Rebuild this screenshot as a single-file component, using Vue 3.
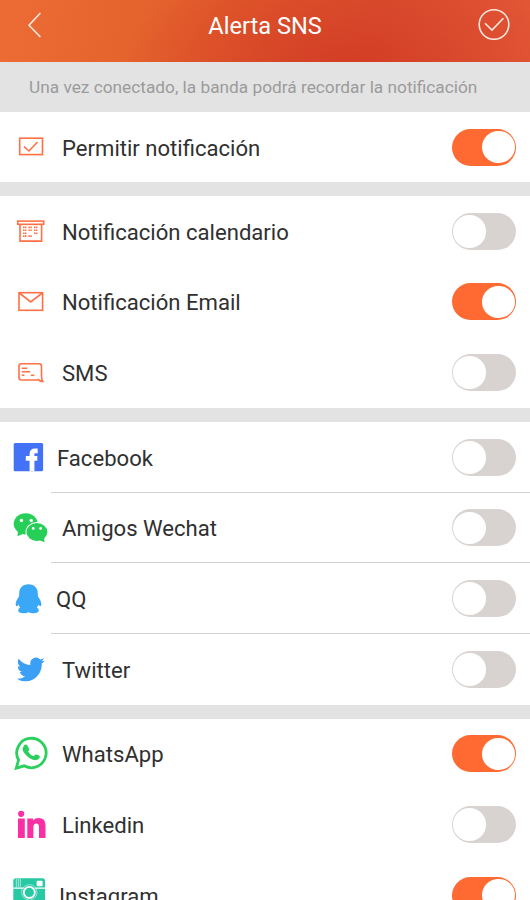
<script setup>
import { reactive } from 'vue'

const groups = reactive([
  [{ id: 'allow', label: 'Permitir notificación', on: true }],
  [
    { id: 'calendar', label: 'Notificación calendario', on: false },
    { id: 'email', label: 'Notificación Email', on: true },
    { id: 'sms', label: 'SMS', on: false },
  ],
  [
    { id: 'facebook', label: 'Facebook', on: false, line: true },
    { id: 'wechat', label: 'Amigos Wechat', on: false, line: true },
    { id: 'qq', label: 'QQ', on: false, line: true },
    { id: 'twitter', label: 'Twitter', on: false },
  ],
  [
    { id: 'whatsapp', label: 'WhatsApp', on: true },
    { id: 'linkedin', label: 'Linkedin', on: false },
    { id: 'instagram', label: 'Instagram', on: true },
  ],
])
</script>

<template>
  <div class="screen">
    <header class="bar">
      <svg class="back" viewBox="0 0 20 30"><path d="M16.4 3 5 15.2 16.4 27" /></svg>
      <h1>Alerta SNS</h1>
      <svg class="done" viewBox="0 0 34 34">
        <circle cx="17" cy="16.5" r="14.8" />
        <path d="M8 15.2 15 22 26.4 10.2" />
      </svg>
    </header>
    <p class="note">Una vez conectado, la banda podrá recordar la notificación</p>
    <section v-for="(group, g) in groups" :key="g" class="group">
      <div v-for="item in group" :key="item.id" class="row" :class="[item.id, { line: item.line }]">
        <svg class="icon" viewBox="0 0 40 40">
          <g v-if="item.id === 'allow'" class="outline">
            <rect x="7.7" y="11.2" width="22.8" height="16.4" />
            <path d="M12 19.7 17 24 25.5 15" />
          </g>
          <g v-else-if="item.id === 'calendar'" class="outline">
            <rect x="5.7" y="10.1" width="26" height="3.2" />
            <path d="M8 13V30.1H29.6V13" />
            <path class="dots" d="M11 16.4h3.4M16.4 16.4h3.4M22 16.4h3.4M11 19.3h3.4M16.4 19.3h3.4M22 19.3h3.4M11 22.2h3.4M22 22.2h3.4M11 25.1h3.4M16.4 25.1h3.4" />
          </g>
          <g v-else-if="item.id === 'email'" class="outline">
            <rect x="7" y="10.7" width="23.6" height="17.6" />
            <path d="M7.3 11 18.7 20 30.3 11" />
          </g>
          <g v-else-if="item.id === 'sms'" class="outline">
            <path d="M26.5 27H9.5Q7 27 7 24.5V13.3Q7 10.8 9.5 10.8H27Q29.5 10.8 29.5 13.3V22.5Q29.3 26 30.8 28.5 27.5 28.5 25.8 26" />
            <path d="M9.7 15.3H15.3M9.7 18.7H18.3M9.7 22.2H12.4M18.8 22.2H22.4" />
          </g>
          <g v-else-if="item.id === 'facebook'">
            <rect x="1.7" y="6" width="29.4" height="28.3" rx="1.5" fill="#4372f6" />
            <path d="M20 34.3V17Q20 13.9 23.2 13.9H25.7M13.8 21.4H25.3" fill="none" stroke="#fff" stroke-width="4.8" />
          </g>
          <g v-else-if="item.id === 'wechat'" fill="#27cf58">
            <ellipse cx="13.7" cy="15.8" rx="12" ry="10.6" />
            <path d="M6 23 5.5 28.3 12 25.5Z" />
            <ellipse cx="24.9" cy="24" rx="11.4" ry="10" fill="#fff" />
            <ellipse cx="24.9" cy="24" rx="10.5" ry="9" />
            <path d="M27 32 32.5 34.3 32 28Z" />
            <g fill="#fff">
              <circle cx="9.4" cy="12.5" r="1.7" /><circle cx="19.2" cy="12.5" r="1.7" />
              <circle cx="21.2" cy="20.4" r="1.4" /><circle cx="28.6" cy="20.4" r="1.4" />
            </g>
          </g>
          <path v-else-if="item.id === 'qq'" fill="#3ba7f7" d="M16.5 5.3C10.5 5.3 7.2 9.4 7.2 14.5L7 17.5C5.2 20 3.7 22.5 3.7 25C3.7 28 5 27.5 6.8 25.8C7.1 27.4 7.5 28 8.2 28.6C5 30.7 5.4 34.3 11 34.3C14 34.3 15.6 33.6 16.5 33.2C17.4 33.6 19 34.3 22 34.3C27.6 34.3 28 30.7 24.8 28.6C25.5 28 25.9 27.4 26.2 25.8C28 27.5 29.3 28 29.3 25C29.3 22.5 27.8 20 26 17.5L25.8 14.5C25.8 9.4 22.5 5.3 16.5 5.3Z" />
          <path v-else-if="item.id === 'twitter'" fill="#3a9ff5" transform="translate(4.7 5.8) scale(1.167 1.22)" d="M23.953 4.57a10 10 0 01-2.825.775 4.958 4.958 0 002.163-2.723c-.951.555-2.005.959-3.127 1.184a4.92 4.92 0 00-8.384 4.482C7.69 8.095 4.067 6.13 1.64 3.162a4.822 4.822 0 00-.666 2.475c0 1.71.87 3.213 2.188 4.096a4.904 4.904 0 01-2.228-.616v.06a4.923 4.923 0 003.946 4.827 4.996 4.996 0 01-2.212.085 4.936 4.936 0 004.604 3.417 9.867 9.867 0 01-6.102 2.105c-.39 0-.779-.023-1.17-.067a13.995 13.995 0 007.557 2.209c9.053 0 13.998-7.496 13.998-13.985 0-.21 0-.42-.015-.63A9.935 9.935 0 0024 4.59z" />
          <g v-else-if="item.id === 'whatsapp'" transform="translate(-.3 -.4)">
            <path d="M4.6 34.6 6.8 26.4A14.7 14.7 0 1 1 12.5 32.2Z" fill="none" stroke="#29d05c" stroke-width="2.8" />
            <path d="M12.3 12Q14 10 15.6 11.9L17.5 15.4Q17.7 16.5 16.4 17.8 18.6 21.6 21.9 22.7L23.9 21Q24.8 20.6 27.8 22.2 28.9 23.2 27.2 25.2 24.2 27.7 20 25.6 13.5 22.3 11.2 17.2 10.2 14.4 12.3 12Z" fill="#29d05c" />
          </g>
          <g v-else-if="item.id === 'linkedin'" fill="#fa2fa3">
            <circle cx="9.2" cy="8.8" r="3.1" />
            <rect x="6" y="13.5" width="6.8" height="19.5" />
            <path d="M15.3 13.5H21V15.4Q23 13.1 26.6 13.1 33.5 13.1 33.5 20.5V33H27V22.3Q27 18.6 24.3 18.6 21.4 18.6 21.4 22.3V33H15.3Z" />
          </g>
          <g v-else>
            <rect x="1.3" y="3.3" width="31.7" height="31.7" rx="2.5" fill="#27c9a4" />
            <g fill="none" stroke="#fff">
              <path d="M4.3 3.5V12.3M6.3 3.5V12.3M8.3 3.5V12.3" stroke-width=".6" />
              <path d="M1.3 13.1H11.5M23 13.1H33" stroke-width="1.3" />
              <circle cx="17.3" cy="17.4" r="7.7" stroke-width=".5" />
              <circle cx="17.3" cy="17.4" r="5.5" stroke-width="1.8" />
            </g>
            <rect x="24.6" y="5.8" width="6" height="5.4" rx="1.2" fill="#fff" />
          </g>
        </svg>
        <span class="label">{{ item.label }}</span>
        <button class="toggle" :class="{ on: item.on }" :aria-label="item.label" @click="item.on = !item.on">
          <i class="knob"></i>
        </button>
      </div>
    </section>
  </div>
</template>

<style>
body {
  overflow: hidden;
}
</style>

<style scoped>
.screen {
  display: flex;
  flex-direction: column;
  height: 900px;
  overflow: hidden;
  background: #e3e3e3;
  color: #303030;
  font-family: Roboto, "Liberation Sans", sans-serif;
}
.bar {
  flex: none;
  box-sizing: border-box;
  height: 62px;
  padding: 0 19px 12px 24px;
  display: flex;
  align-items: center;
  justify-content: space-between;
  background:
    radial-gradient(ellipse 230px 95px at 350px 62px, rgba(209, 58, 35, 0.8) 0%, rgba(211, 62, 38, 0.4) 50%, rgba(220, 75, 40, 0) 100%),
    linear-gradient(100deg, #ed6c35 0%, #e5642d 25%, #df562a 45%, #da4b2c 70%, #e25736 100%);
}
.back {
  width: 20px;
  height: 30px;
}
.done {
  width: 34px;
  height: 34px;
}
.back,
.done {
  fill: none;
  stroke: #ffe9e0;
  stroke-width: 1.6;
}
h1 {
  margin: 0 0 0 9px;
  padding-top: 1px;
  color: #fff;
  font-size: 23.6px;
  font-weight: 400;
  line-height: 30px;
}
.note {
  flex: none;
  margin: 0;
  padding-left: 29px;
  height: 50px;
  line-height: 51px;
  color: #9b9b9b;
  font-size: 17.27px;
  white-space: nowrap;
}
.group {
  flex: none;
  margin-bottom: 14px;
  background: #fff;
}
.row {
  box-sizing: border-box;
  height: 70.67px;
  padding: 0 14px 0 12px;
  display: flex;
  align-items: center;
}
.row.allow {
  height: 70px;
}
.row.line {
  background: linear-gradient(#d6d2d2, #d6d2d2) 51px 100% / 100% 1px no-repeat;
}
.icon {
  flex: none;
  width: 40px;
  height: 40px;
}
.outline {
  fill: none;
  stroke: #ff7044;
  stroke-width: 1.6;
}
.dots {
  stroke-dasharray: 1.5 0.4;
}
.label {
  flex: 1;
  margin-left: 10px;
  padding-top: 1px;
  font-size: 22.1px;
  line-height: 30px;
  white-space: nowrap;
}
.facebook .label {
  margin-left: 5px;
}
.qq .label {
  margin-left: 4px;
}
.instagram .label {
  margin-left: 7px;
}
.toggle {
  flex: none;
  box-sizing: border-box;
  width: 64px;
  height: 37px;
  padding: 0 1.4px;
  display: flex;
  align-items: center;
  border: 0;
  border-radius: 19px;
  background: #d8d3d1;
}
.toggle.on {
  justify-content: flex-end;
  background: #ff6a33;
}
.knob {
  width: 32.5px;
  height: 32.5px;
  border-radius: 50%;
  background: #fff;
}
</style>
